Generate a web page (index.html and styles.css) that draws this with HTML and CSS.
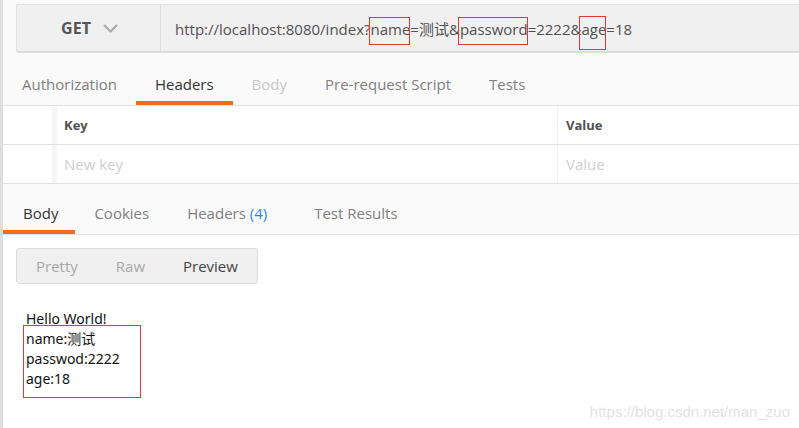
FILE: index.html
```html
<!DOCTYPE html>
<html lang="en">
  <head>
    <meta charset="UTF-8" />
    <meta name="viewport" content="width=device-width, initial-scale=1.0" />
    <title>Request</title>
    <link rel="stylesheet" href="styles.css">
  </head>
  <body>
    <div class="app">
      <div class="request-top">
        <div class="url-bar">
          <div class="method">
            <span class="method-name">GET</span>
            <svg class="chevron" width="15" height="9" viewBox="0 0 15 9">
              <path d="M1 1 L7.5 7.5 L14 1" fill="none" stroke="#a8a8a8" stroke-width="2" />
            </svg>
          </div>
          <div class="url">
            <span>http://localhost:8080/index?<span class="mark">name</span>=测试&amp;<span class="mark">password</span>=2222&amp;<span class="mark mark-tall">age</span>=18</span>
          </div>
        </div>
        <div class="tabs">
          <div class="tab">Authorization</div>
          <div class="tab active">Headers</div>
          <div class="tab disabled">Body</div>
          <div class="tab">Pre-request Script</div>
          <div class="tab">Tests</div>
        </div>
      </div>

      <div class="kv-table">
        <div class="kv-row kv-head">
          <div class="kv-check"></div>
          <div class="kv-key">Key</div>
          <div class="kv-value">Value</div>
        </div>
        <div class="kv-row kv-empty">
          <div class="kv-check"></div>
          <div class="kv-key">New key</div>
          <div class="kv-value">Value</div>
        </div>
      </div>

      <div class="tabs response-tabs">
        <div class="tab active">Body</div>
        <div class="tab">Cookies</div>
        <div class="tab">Headers <span class="count">(4)</span></div>
        <div class="tab tab-wide">Test Results</div>
      </div>

      <div class="response">
        <div class="view-switch">
          <div class="view-btn">Pretty</div>
          <div class="view-btn">Raw</div>
          <div class="view-btn selected">Preview</div>
        </div>
        <div class="preview">
          <div class="line">Hello World!</div>
          <div class="params">
            <div class="line">name:测试</div>
            <div class="line">passwod:2222</div>
            <div class="line">age:18</div>
          </div>
        </div>
      </div>

      <div class="watermark">https://blog.csdn.net/man_zuo</div>
    </div>
  </body>
</html>
```

FILE: styles.css
```css
body {
  margin: 0;
  background-color: white;
  font-family: "Open Sans", "Noto Sans CJK SC", sans-serif;
  color: #505050;
}
.app {
  position: relative;
  height: 428px;
  border-left: 3px solid #dedede;
  overflow: hidden;
}
.request-top {
  background-color: #fafafa;
  padding-top: 4px;
  border-bottom: 1px solid #e2e2e2;
}
.url-bar {
  display: flex;
  height: 46px;
  margin-left: 13px;
  background-color: #f0f0f0;
  border: 1px solid #e2e2e2;
  border-right: none;
  border-bottom: 2px solid #dcdcdc;
  border-radius: 3px 0 0 3px;
}
.method {
  width: 144px;
  display: flex;
  justify-content: center;
  align-items: center;
  gap: 12px;
  border-right: 1px solid #dedede;
  padding-left: 2px;
  box-sizing: border-box;
}
.method-name {
  font-weight: bold;
  font-size: 16px;
  color: #555;
}
.chevron {
  margin-top: 1px;
}
.url {
  display: flex;
  align-items: center;
  padding-left: 14px;
  font-size: 15px;
  white-space: nowrap;
}
.mark {
  position: relative;
}
.mark::after {
  content: "";
  position: absolute;
  top: -2px;
  bottom: -6px;
  left: -2px;
  right: 0;
  border: 1px solid #e53935;
}
.mark-tall::after {
  top: -3px;
  bottom: -11px;
}
.tabs {
  display: flex;
  height: 52px;
}
.tab {
  box-sizing: border-box;
  height: 52px;
  padding: 21px 19px 0;
  font-size: 15px;
  line-height: 20px;
  color: #808080;
  border-bottom: 4px solid transparent;
  white-space: nowrap;
}
.tab.active {
  color: #333;
  border-bottom-color: #f26b21;
}
.tab.disabled {
  color: #c8c8c8;
}
.count {
  color: #1f8ceb;
}
.kv-row {
  display: flex;
  height: 38px;
  border-bottom: 1px solid #e2e2e2;
}
.kv-check {
  width: 49px;
  border-right: 5px solid #f6f6f6;
}
.kv-key,
.kv-value {
  display: flex;
  align-items: center;
  box-sizing: border-box;
}
.kv-key {
  width: 501px;
  padding-left: 7px;
  border-right: 1px solid #f0f0f0;
}
.kv-value {
  flex: 1;
  padding-left: 8px;
}
.kv-head .kv-key,
.kv-head .kv-value {
  font-size: 13px;
  font-weight: bold;
  color: #505050;
}
.kv-empty .kv-key,
.kv-empty .kv-value {
  font-size: 15px;
  color: #cfcfcf;
}
.response-tabs {
  background-color: #fafafa;
  height: 50px;
  border-bottom: 1px solid #e2e2e2;
}
.response-tabs .tab {
  height: 50px;
  padding-top: 19px;
}
.response-tabs .tab:first-child {
  padding-left: 20px;
  padding-right: 17px;
}
.response-tabs .tab-wide {
  padding-left: 28px;
}
.response {
  padding: 13px 0 0 13px;
}
.view-switch {
  display: inline-flex;
  height: 34px;
  background-color: #f0f0f0;
  border: 1px solid #dcdcdc;
  border-radius: 3px;
}
.view-btn {
  display: flex;
  align-items: center;
  padding: 0 19px;
  font-size: 15px;
  color: #a8a8a8;
}
.view-btn.selected {
  color: #444;
}
.preview {
  margin-top: 25px;
  padding-left: 10px;
  font-family: "Noto Sans", "Noto Sans CJK SC", sans-serif;
  font-size: 14px;
  color: #111;
}
.line {
  line-height: 20px;
}
.params {
  width: 114px;
  margin: -4px 0 0 -3px;
  padding: 3px 0 8px 2px;
  border: 1px solid #e53935;
}
.watermark {
  position: absolute;
  right: 9px;
  bottom: 8px;
  font-family: "Liberation Sans", Arial, sans-serif;
  font-size: 15px;
  color: #e2e2e2;
}
```
